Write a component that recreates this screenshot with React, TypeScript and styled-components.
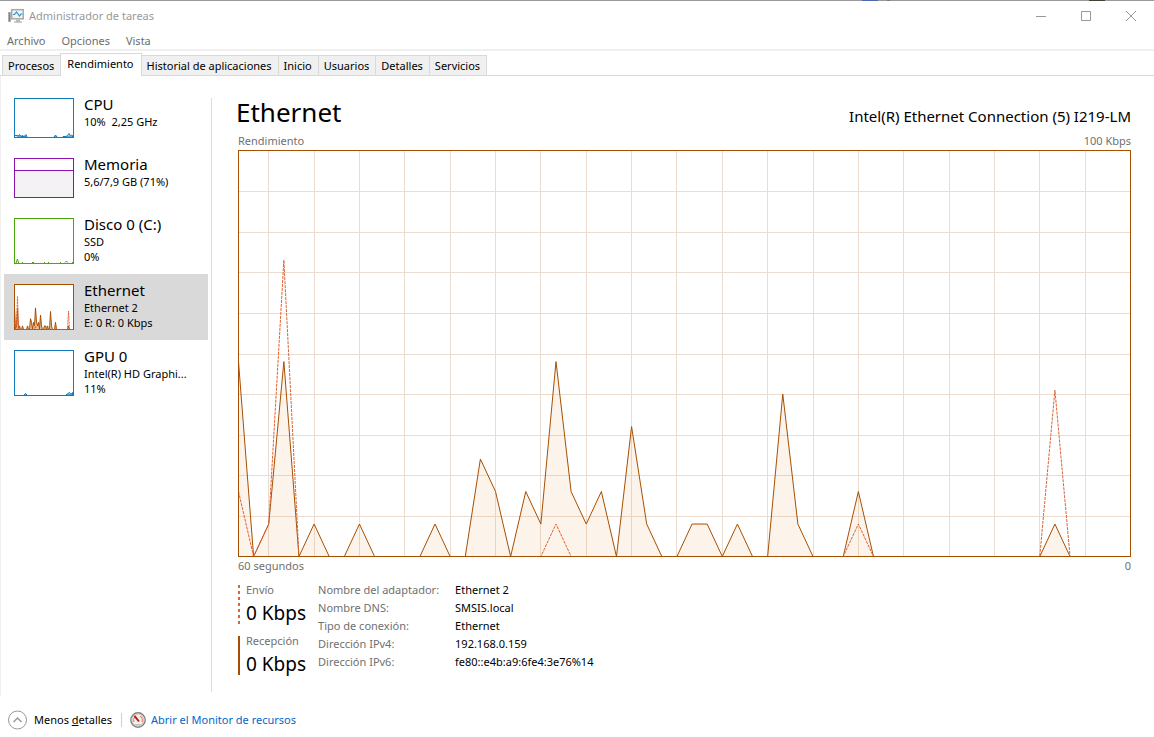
import React from "react";
import styled, { createGlobalStyle } from "styled-components";

const GlobalStyle = createGlobalStyle`
  *, *::before, *::after { box-sizing: border-box; }
  body {
    margin: 0;
    background: #fff;
    color: #000;
    font: 11px/16px "Noto Sans", "Open Sans", "Liberation Sans", sans-serif;
  }
  button {
    margin: 0;
    padding: 0;
    border: 0;
    background: none;
    color: inherit;
    font: inherit;
    text-align: left;
  }
  svg { display: block; flex: none; }
`;

const Window = styled.div`
  display: flex;
  flex-direction: column;
  min-height: 100vh;
`;

/* One-pixel window edge with the desktop showing through on the right. */
const TopEdge = styled.div`
  height: 1px;
  background: linear-gradient(
    to left,
    #999 49px,
    #3c4438 49px 65px,
    #999 65px 264px,
    #8a7460 264px 267px,
    #999 267px 276px,
    #4a6cae 276px 292px,
    #999 292px
  );
`;

const TitleBar = styled.header`
  display: flex;
  align-items: center;
  height: 30px;
  padding-left: 8px;
  color: #999;
`;

const WindowTitle = styled.h1`
  flex: 1;
  margin: 0 0 0 5px;
  font-size: 11px;
  line-height: 16px;
  font-weight: 400;
`;

const CaptionButton = styled.button`
  display: flex;
  align-items: center;
  justify-content: center;
  width: 45px;
  height: 28px;
`;

const MenuBar = styled.nav`
  display: flex;
  gap: 16px;
  height: 20px;
  padding: 1px 7px 0;
  border-bottom: 2px solid #f0f0f0;
  color: #6d6d6d;
`;

const TabBar = styled.div`
  display: flex;
  align-items: flex-end;
  height: 25px;
  padding-left: 2px;
  border-bottom: 1px solid #d9d9d9;
`;

const Tab = styled.button<{ $active?: boolean }>`
  height: ${(p) => (p.$active ? 23 : 20)}px;
  margin-bottom: ${(p) => (p.$active ? -1 : 0)}px;
  margin-right: -1px;
  padding: ${(p) => (p.$active ? "0 7px 3px 6px" : "0 6px 0 5px")};
  border: 1px solid #d9d9d9;
  border-bottom: 0;
  background: ${(p) => (p.$active ? "#fff" : "#f0f0f0")};
`;

const Body = styled.div`
  display: flex;
  flex: 1;
  border-left: 1px solid #f0f0f0;
`;

const Sidebar = styled.aside`
  flex: none;
  width: 211px;
  margin: 22px 0 4px;
  border-right: 1px solid #dcdcdc;
`;

const ResourceList = styled.div`
  display: flex;
  flex-direction: column;
  margin: -10px 3px 0;
`;

const Resource = styled.button<{ $selected?: boolean }>`
  display: flex;
  gap: 10px;
  padding: 10px;
  background: ${(p) => (p.$selected ? "#d9d9d9" : "transparent")};
`;

const ResourceText = styled.span`
  display: flex;
  flex-direction: column;
  min-width: 0;
  margin: -3px 0 -4px;
  line-height: 15px;
  white-space: pre;
`;

const ResourceName = styled.span`
  font-size: 15px;
  line-height: 19px;
`;

const Panel = styled.main`
  display: flex;
  flex: 1;
  flex-direction: column;
  min-width: 0;
  padding: 18px 23px 21px 26px;
`;

const PanelHeader = styled.div`
  display: flex;
  align-items: baseline;
  justify-content: space-between;
  height: 38px;
`;

const PanelTitle = styled.h2`
  margin: 0 0 0 -2px;
  font-size: 26px;
  line-height: 36px;
  font-weight: 400;
`;

const AdapterName = styled.span`
  font-size: 15px;
  line-height: 20px;
`;

const AxisLabels = styled.div`
  display: flex;
  justify-content: space-between;
  height: 18px;
  line-height: 18px;
  color: #707070;
`;

const ChartBox = styled.div`
  display: flex;
  flex: 1;
  min-height: 240px;
  border: 1px solid #a74f01;
`;

const ChartSvg = styled.svg`
  flex: 1;
  width: 100%;
  height: 100%;
  min-width: 0;
`;

const Details = styled.div`
  display: flex;
  gap: 12px;
  padding-top: 6px;
`;

const Counters = styled.div`
  display: flex;
  flex-direction: column;
  gap: 12px;
  padding-top: 4px;
`;

const Counter = styled.div<{ $dashed?: boolean }>`
  display: flex;
  flex-direction: column;
  height: 39px;
  padding-left: 8px;
  background: ${(p) =>
      p.$dashed
        ? "repeating-linear-gradient(#d8663a 0 3px, transparent 3px 6px)"
        : "linear-gradient(#a74f01, #a74f01)"}
    left top / 2px 100% no-repeat;
`;

const CounterLabel = styled.div`
  margin-top: -3px;
  color: #707070;
`;

const CounterValue = styled.div`
  font-size: 19px;
  line-height: 30px;
  white-space: nowrap;
`;

const Properties = styled.table`
  border-collapse: collapse;
  line-height: 18px;
  th {
    width: 137px;
    padding: 0;
    color: #707070;
    font-weight: 400;
    text-align: left;
    white-space: nowrap;
  }
  td { padding: 0; }
`;

const Footer = styled.footer`
  display: flex;
  align-items: center;
  height: 41px;
  padding: 6px 8px 0;
`;

const FooterButton = styled.button`
  display: flex;
  align-items: center;
  gap: 6px;
`;

const FooterLink = styled.a`
  display: flex;
  align-items: center;
  gap: 5px;
  color: #0066cc;
  text-decoration: none;
`;

const Separator = styled.span`
  width: 1px;
  height: 14px;
  margin: 0 8px 0 9px;
  background: #d0d0d0;
`;

const received = [
  48, 0, 8, 48, 0, 8, 0, 0, 8, 0, 0, 0, 0, 8, 0, 0, 24, 16, 0, 16, 8, 48, 16, 8, 16, 0, 32, 8, 0, 0,
  8, 8, 0, 8, 0, 0, 40, 8, 0, 0, 0, 16, 0, 0, 0, 0, 0, 0, 0, 0, 0, 0, 0, 0, 8, 0, 0, 0, 0, 0,
];
const sent = received.map((_, i) => (({ 0: 16, 2: 8, 3: 73, 21: 8, 41: 8, 54: 41 }) as Record<number, number>)[i] ?? 0);

const toPoints = (data: number[], w: number, h: number) =>
  data.map((v, i) => `${((i * w) / (data.length - 1)).toFixed(2)},${(h - (v * h) / 100).toFixed(2)}`).join(" ");

function NetworkChart() {
  const w = 892;
  const h = 406;
  const columns = Array.from({ length: 19 }, (_, i) => Math.round(((i * 3 + 2) * w) / 59) + 0.5);
  const rows = Array.from({ length: 9 }, (_, i) => Math.ceil((i + 1) * 40.62) + 0.5);
  return (
    <ChartSvg viewBox="1 1 891 405" preserveAspectRatio="none" role="img" aria-label="Rendimiento de Ethernet">
      <g stroke="#ecdccf" shapeRendering="crispEdges">
        {columns.map((x) => (
          <line key={x} x1={x} x2={x} y1="0" y2={h} vectorEffect="non-scaling-stroke" />
        ))}
        {rows.map((y) => (
          <line key={y} x1="0" x2={w} y1={y} y2={y} vectorEffect="non-scaling-stroke" />
        ))}
      </g>
      <g transform="translate(0.5 0.5)">
        <polygon points={`0,${h} ${toPoints(received, w, h)} ${w},${h}`} fill="rgba(220,120,30,0.09)" />
        <polyline points={toPoints(received, w, h)} fill="none" stroke="#a74f01" vectorEffect="non-scaling-stroke" />
        <polyline
          points={toPoints(sent, w, h)}
          fill="none"
          stroke="#e0622f"
          strokeDasharray="3 1"
          vectorEffect="non-scaling-stroke"
        />
      </g>
    </ChartSvg>
  );
}

interface ThumbProps {
  height: number;
  color: string;
  children?: React.ReactNode;
}

function Thumb({ height, color, children }: ThumbProps) {
  return (
    <svg width="60" height={height} viewBox={`0 0 60 ${height}`} fill="none" stroke={color} aria-hidden="true">
      <rect x="0.5" y="0.5" width="59" height={height - 1} fill="#fff" />
      {children}
    </svg>
  );
}

const cpuThumb = (
  <Thumb height={40} color="#117dbb">
    <path
      d="M1 37.5h2l1 1 1.5-2 1.5 2 2-1 1 1 2-2 1 2.500zM40 39l1.5-2 1.5 2zM49 38.5h3l1.5-1 1.5-2 1.5 2.500 1-1 1 .5v1.500h-9z"
      fill="#117dbb"
      fillOpacity="0.3"
    />
  </Thumb>
);
const memoryThumb = (
  <Thumb height={40} color="#8b12ae">
    <rect x="1" y="12" width="58" height="27" fill="#f4f2f4" stroke="none" />
    <path d="M1 12.5h58" />
  </Thumb>
);
const diskThumb = (
  <Thumb height={46} color="#4da60c">
    <path d="M2 45l1.5-4 1 4M8 44.5h1M18 44.5h2M30 44.5h1M34 44.5h1M46 44.5h1M51 44.5l1.5-1.5 1 1.5M58 44.5h1" />
  </Thumb>
);
const ethernetThumb = (
  <Thumb height={46} color="#a74f01">
    <g transform="translate(0.5 0.5)">
      <polygon points={`0,45 ${toPoints(received, 59, 45)} 59,45`} fill="rgba(200,110,40,0.4)" />
      <polyline points={toPoints(sent, 59, 45)} stroke="#e0622f" strokeDasharray="2 1" />
    </g>
  </Thumb>
);
const gpuThumb = (
  <Thumb height={46} color="#117dbb">
    <path d="M10 45l1.5-1.500 1.5 1.500zM52 45l2-1.500 1.5-1 1.5 2 1.500-2v2.500z" fill="#117dbb" fillOpacity="0.3" />
  </Thumb>
);

const resources = [
  { name: "CPU", lines: ["10%  2,25 GHz"], thumb: cpuThumb },
  { name: "Memoria", lines: ["5,6/7,9 GB (71%)"], thumb: memoryThumb },
  { name: "Disco 0 (C:)", lines: ["SSD", "0%"], thumb: diskThumb },
  { name: "Ethernet", lines: ["Ethernet 2", "E: 0 R: 0 Kbps"], thumb: ethernetThumb, selected: true },
  { name: "GPU 0", lines: ["Intel(R) HD Graphi...", "11%"], thumb: gpuThumb },
];

const tabs = [
  "Procesos",
  "Rendimiento",
  "Historial de aplicaciones",
  "Inicio",
  "Usuarios",
  "Detalles",
  "Servicios",
];

const properties = [
  ["Nombre del adaptador:", "Ethernet 2"],
  ["Nombre DNS:", "SMSIS.local"],
  ["Tipo de conexión:", "Ethernet"],
  ["Dirección IPv4:", "192.168.0.159"],
  ["Dirección IPv6:", "fe80::e4b:a9:6fe4:3e76%14"],
];

function AppIcon() {
  return (
    <svg width="16" height="16" viewBox="0 0 16 16" fill="none" aria-hidden="true">
      <rect x="0.5" y="4.5" width="2" height="9" fill="#7d7d7d" stroke="#b0b0b0" />
      <path d="M1 6.5h1" stroke="#5fae5f" />
      <rect x="3.7" y="1.7" width="11.6" height="9.1" fill="#e9f4fb" stroke="#a8a8a8" strokeWidth="1.5" />
      <path d="M5 6.5h1.5l2-2.5 3 4 1.5-2h1.5" stroke="#2f8fc4" strokeWidth="1.2" />
      <path d="M8 11.500h4v2H8z" fill="#b8b8b8" />
      <path d="M6 14h8" stroke="#9a9a9a" />
    </svg>
  );
}

function GaugeIcon() {
  return (
    <svg width="16" height="16" viewBox="0 0 16 16" fill="none" aria-hidden="true">
      <circle cx="8" cy="8" r="7.2" fill="#f3f1ef" stroke="#85817d" strokeWidth="1.4" />
      <circle cx="8" cy="8" r="5.8" stroke="#d2cecb" />
      <path d="M4 10a4.5 4.5 0 0 1 .8-5" stroke="#8a9a8a" />
      <path d="M10 4.2a4.5 4.5 0 0 1 2 5.8" stroke="#e08a5c" strokeWidth="1.3" />
      <path d="M4.5 3.8l4.5 5.7" stroke="#d01414" strokeWidth="2" />
      <path d="M5 12.5h6" stroke="#c4c0bc" />
    </svg>
  );
}

export default function App() {
  return (
    <>
      <GlobalStyle />
      <Window>
        <TopEdge />
        <TitleBar>
          <AppIcon />
          <WindowTitle>Administrador de tareas</WindowTitle>
          <CaptionButton aria-label="Minimizar">
            <svg width="11" height="10" stroke="#999">
              <path d="M0 5.5h10" />
            </svg>
          </CaptionButton>
          <CaptionButton aria-label="Maximizar">
            <svg width="11" height="10" fill="none" stroke="#999">
              <path d="M.5 .5h9v9h-9z" />
            </svg>
          </CaptionButton>
          <CaptionButton aria-label="Cerrar">
            <svg width="11" height="10" stroke="#999">
              <path d="M0 0l10 10M10 0l-10 10" />
            </svg>
          </CaptionButton>
        </TitleBar>
        <MenuBar>
          <button>Archivo</button>
          <button>Opciones</button>
          <button>Vista</button>
        </MenuBar>
        <TabBar role="tablist">
          {tabs.map((t) => (
            <Tab key={t} role="tab" aria-selected={t === "Rendimiento"} $active={t === "Rendimiento"}>
              {t}
            </Tab>
          ))}
        </TabBar>
        <Body>
          <Sidebar>
            <ResourceList>
              {resources.map((r) => (
                <Resource key={r.name} $selected={r.selected}>
                  {r.thumb}
                  <ResourceText>
                    <ResourceName>{r.name}</ResourceName>
                    {r.lines.map((l) => (
                      <span key={l}>{l}</span>
                    ))}
                  </ResourceText>
                </Resource>
              ))}
            </ResourceList>
          </Sidebar>
          <Panel>
            <PanelHeader>
              <PanelTitle>Ethernet</PanelTitle>
              <AdapterName>Intel(R) Ethernet Connection (5) I219-LM</AdapterName>
            </PanelHeader>
            <AxisLabels>
              <span>Rendimiento</span>
              <span>100 Kbps</span>
            </AxisLabels>
            <ChartBox>
              <NetworkChart />
            </ChartBox>
            <AxisLabels>
              <span>60 segundos</span>
              <span>0</span>
            </AxisLabels>
            <Details>
              <Counters>
                <Counter $dashed>
                  <CounterLabel>Envío</CounterLabel>
                  <CounterValue>0 Kbps</CounterValue>
                </Counter>
                <Counter>
                  <CounterLabel>Recepción</CounterLabel>
                  <CounterValue>0 Kbps</CounterValue>
                </Counter>
              </Counters>
              <div>
                <Properties>
                  <tbody>
                    {properties.map(([label, value]) => (
                      <tr key={label}>
                        <th scope="row">{label}</th>
                        <td>{value}</td>
                      </tr>
                    ))}
                  </tbody>
                </Properties>
              </div>
            </Details>
          </Panel>
        </Body>
        <Footer>
          <FooterButton>
            <svg width="20" height="20" fill="none" aria-hidden="true">
              <circle cx="9.5" cy="10" r="9" stroke="#999" />
              <path d="M5.5 12l4-4 4 4" stroke="#999" strokeWidth="1.5" />
            </svg>
            <span>
              Menos <u>d</u>etalles
            </span>
          </FooterButton>
          <Separator />
          <FooterLink href="#monitor">
            <GaugeIcon />
            Abrir el Monitor de recursos
          </FooterLink>
        </Footer>
      </Window>
    </>
  );
}
